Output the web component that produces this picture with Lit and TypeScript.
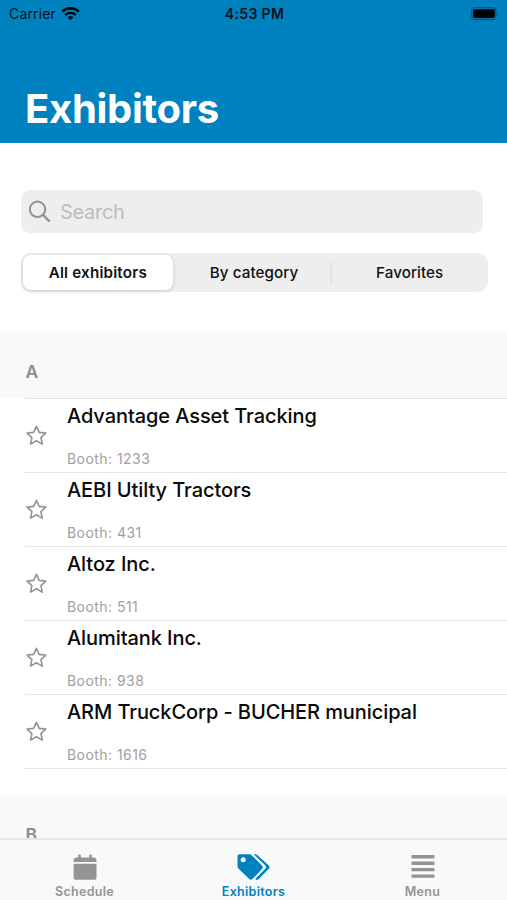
import { LitElement, html, css, svg } from "lit";
import { customElement, property, state } from "lit/decorators.js";
import { classMap } from "lit/directives/class-map.js";

interface Exhibitor {
  name: string;
  booth: string;
}

const EXHIBITORS: Exhibitor[] = [
  { name: "Advantage Asset Tracking", booth: "1233" },
  { name: "AEBI Utilty Tractors", booth: "431" },
  { name: "Altoz Inc.", booth: "511" },
  { name: "Alumitank Inc.", booth: "938" },
  { name: "ARM TruckCorp - BUCHER municipal", booth: "1616" },
];

const SEGMENTS = ["All exhibitors", "By category", "Favorites"];

@customElement("status-bar")
class StatusBar extends LitElement {
  static styles = css`
    :host {
      display: grid;
      grid-template-columns: 1fr auto 1fr;
      align-items: center;
      height: 27px;
      padding: 0 7px 0 9px;
      box-sizing: border-box;
      color: #06121c;
      font-size: 14px;
    }
    .carrier {
      display: flex;
      align-items: center;
      gap: 5px;
      letter-spacing: 0.15px;
    }
    .time {
      font-weight: 600;
      letter-spacing: 0.35px;
    }
    .battery {
      justify-self: end;
    }
    svg {
      display: block;
    }
  `;
  render() {
    return html`
      <div class="carrier">
        <span>Carrier</span>
        <svg width="19" height="14" viewBox="0 0 19 14">
          <path d="M1.2 4.7a12 12 0 0 1 16.6 0" fill="none" stroke="#000" stroke-width="2.5" />
          <path d="M4.2 8a7.6 7.6 0 0 1 10.6 0" fill="none" stroke="#000" stroke-width="2.3" />
          <path d="M6.6 10.3a4.2 4.2 0 0 1 5.8 0L9.5 13.3z" fill="#000" />
        </svg>
      </div>
      <span class="time">4:53 PM</span>
      <svg class="battery" width="30" height="14" viewBox="0 0 30 14">
        <rect x="1.7" y="0.7" width="24.2" height="11.8" rx="3.2" fill="none" stroke="#045784" stroke-width="1.3" />
        <rect x="3" y="2.3" width="21.8" height="8.6" rx="1.8" fill="#000" />
        <path d="M27.8 4.7q1.7 1.9 0 3.8z" fill="#045784" />
      </svg>
    `;
  }
}

@customElement("exhibitor-row")
class ExhibitorRow extends LitElement {
  @property() name = "";
  @property() booth = "";

  static styles = css`
    :host {
      display: grid;
      grid-template-columns: 42px 1fr;
      align-items: center;
      height: 74.1px;
      margin-left: 25px;
      box-sizing: border-box;
      border-bottom: 1px solid #e6e6e6;
    }
    .star {
      display: block;
    }
    .text {
      display: flex;
      flex-direction: column;
      justify-content: space-between;
      height: 100%;
      box-sizing: border-box;
      padding: 5px 0 4px;
      white-space: nowrap;
    }
    .name {
      font-size: 20px;
      line-height: 24px;
      font-weight: 500;
      color: #0a0a0a;
      letter-spacing: -0.08px;
    }
    .booth {
      font-size: 14px;
      line-height: 18px;
      color: #a0a0a0;
      letter-spacing: 0.45px;
    }
  `;
  render() {
    return html`
      <svg class="star" width="23" height="22" viewBox="0 0 23 22">
        <path
          d="M11.4 1.3L14.2 7.4L20.8 8.1L15.9 12.6L17.3 19.1L11.4 15.8L5.5 19.1L6.9 12.6L2 8.1L8.6 7.4Z"
          fill="none"
          stroke="#949494"
          stroke-width="1.6"
          stroke-linejoin="round"
        />
      </svg>
      <div class="text">
        <span class="name">${this.name}</span>
        <span class="booth">Booth: ${this.booth}</span>
      </div>
    `;
  }
}

@customElement("tab-bar")
class TabBar extends LitElement {
  static styles = css`
    :host {
      display: grid;
      grid-template-columns: repeat(3, 1fr);
      height: 62.5px;
      box-sizing: border-box;
      border-top: 2px solid #e8e8e8;
      background: #f9f9f9;
    }
    .tab {
      display: flex;
      flex-direction: column;
      align-items: center;
      padding-top: 14.5px;
      color: #949494;
      font-size: 12.5px;
      line-height: 16px;
      font-weight: 600;
      letter-spacing: 0.3px;
    }
    .tab svg {
      display: block;
      margin-bottom: 3px;
    }
    .active {
      color: #0081c0;
      letter-spacing: 0.3px;
    }
  `;
  render() {
    const calendar = svg`
      <path d="M3.6 3.4H5.2V1.2q0-.8.8-.8h1q.8 0 .8.8V3.4H16.2V1.2q0-.8.8-.8h1q.8 0 .8.8V3.4H20.4Q23.5 3.6 23.5 6.4V7.9H.6V6.4Q.6 3.5 3.6 3.4Z" />
      <path d="M.6 9.8H23.5V23.2q0 2.6-2.7 2.6H3.3Q.6 25.8 .6 23.2Z" />`;
    const tags = svg`
      <path fill-rule="evenodd" d="M2.6.2H12.4q1.2 0 2 .8L25 11.4q1.7 1.8 0 3.6L15.4 25.1q-1.6 1.5-3.2 0L1.4 14.4Q.5 13.4.5 12.2V2.3Q.5.2 2.6.2ZM6.2 3.2a2.5 2.5 0 1 0 0 5a2.5 2.5 0 1 0 0-5Z" />
      <path d="M16.6.2h1.6q1.2 0 2 .8L31.8 11.6q1.5 1.6 0 3.2L21.8 25.1q-1.6 1.4-3 .4L18.3 25L28.3 14.8q1.5-1.7 0-3.4Z" />`;
    const menu = svg`
      <rect x=".5" y="1.1" width="23" height="3.3" rx=".6" />
      <rect x=".5" y="7.6" width="23" height="3.3" rx=".6" />
      <rect x=".5" y="14" width="23" height="3.3" rx=".6" />
      <rect x=".5" y="20.4" width="23" height="3.3" rx=".6" />`;
    return html`
      <div class="tab">
        <svg width="24" height="27" viewBox="0 0 24 27" fill="currentColor">${calendar}</svg>
        Schedule
      </div>
      <div class="tab active">
        <svg width="33" height="27" viewBox="0 0 33 27" fill="currentColor">${tags}</svg>
        Exhibitors
      </div>
      <div class="tab">
        <svg width="24" height="27" viewBox="0 0 24 27" fill="currentColor">${menu}</svg>
        Menu
      </div>
    `;
  }
}

@customElement("app-root")
class AppRoot extends LitElement {
  @state() private selected = 0;

  static styles = css`
    :host {
      display: flex;
      flex-direction: column;
      height: 900px;
      overflow: hidden;
      background: #fff;
      font-family: Inter, "Liberation Sans", sans-serif;
    }
    .header {
      display: flex;
      flex-direction: column;
      justify-content: space-between;
      flex: none;
      height: 142.6px;
      box-sizing: border-box;
      padding-bottom: 10px;
      background: #0081c0;
    }
    h1 {
      margin: 0 0 0 25px;
      color: #fff;
      font-size: 40px;
      line-height: 48px;
      font-weight: 700;
      letter-spacing: -0.3px;
    }
    .content {
      flex: 1;
      min-height: 0;
      overflow: hidden;
    }
    .search {
      display: flex;
      align-items: center;
      gap: 9px;
      height: 43px;
      margin: 47px 24px 0 21px;
      padding-left: 7px;
      border-radius: 9px;
      background: #eee;
      color: #bcbcbc;
      font-size: 20px;
      letter-spacing: -0.3px;
    }
    .search span {
      padding-top: 2px;
    }
    .segments {
      display: grid;
      grid-template-columns: repeat(3, 1fr);
      height: 39px;
      margin: 20px 19px 0 21px;
      border-radius: 10px;
      background: #eee;
    }
    .segment {
      position: relative;
      display: flex;
      align-items: center;
      justify-content: center;
      padding-right: 1px;
      color: #111;
      font-size: 15.2px;
      font-weight: 500;
      letter-spacing: 0.08px;
    }
    .segment.on {
      margin: 2px 4px 2px 2px;
      padding: 0;
      border-radius: 8px;
      background: #fff;
      box-shadow: 0 1px 4px rgba(0, 0, 0, 0.16);
      font-weight: 600;
      letter-spacing: 0.18px;
    }
    .segment.rule::after {
      content: "";
      position: absolute;
      right: 0;
      top: 9px;
      width: 2px;
      height: 21px;
      border-radius: 1px;
      background: #e1e1e1;
    }
    .letter {
      display: flex;
      align-items: flex-end;
      height: 66px;
      box-sizing: border-box;
      padding: 0 0 15px 25.5px;
      background: #f9f9f9;
      color: #8c8c8c;
      font-size: 17.5px;
      line-height: 22px;
      font-weight: 600;
    }
    .first {
      margin-top: 40.4px;
    }
    .line {
      height: 1px;
      margin: 0 0 0 25px;
      background: #e3e3e3;
    }
    .next {
      margin-top: 26.5px;
      padding-bottom: 16px;
    }
  `;

  render() {
    return html`
      <div class="header">
        <status-bar></status-bar>
        <h1>Exhibitors</h1>
      </div>
      <div class="content">
        <div class="search">
          <svg width="23" height="23" viewBox="0 0 23 23" fill="none" stroke="#909090">
            <circle cx="9.5" cy="9.3" r="7.7" stroke-width="2" />
            <path d="M15.1 15L20.9 20.8" stroke-width="2.4" stroke-linecap="round" />
          </svg>
          <span>Search</span>
        </div>
        <div class="segments">
          ${SEGMENTS.map(
            (label, i) => html`<div
              class=${classMap({
                segment: true,
                on: i === this.selected,
                rule: i !== this.selected && i + 1 !== this.selected && i < SEGMENTS.length - 1,
              })}
              @click=${() => (this.selected = i)}
            >
              ${label}
            </div>`
          )}
        </div>
        <div class="letter first">A</div>
        <div class="line"></div>
        ${EXHIBITORS.map((e) => html`<exhibitor-row .name=${e.name} .booth=${e.booth}></exhibitor-row>`)}
        <div class="letter next">B</div>
      </div>
      <tab-bar></tab-bar>
    `;
  }
}
